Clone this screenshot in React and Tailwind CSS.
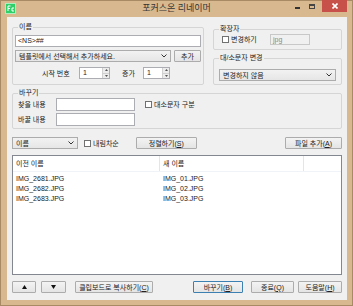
import React from "react";

const font = { fontFamily: '"Liberation Sans", "Noto Sans CJK KR", sans-serif' };

function Group({ title, className, children }) {
  return (
    <div className={`relative border border-[#d5d5d5] rounded-[2px] ${className}`}>
      <span className="absolute left-[5px] top-[-6px] px-[1px] bg-[#f0f0f0] text-[7px] leading-[10px] text-[#222]">
        {title}
      </span>
      {children}
    </div>
  );
}

function Btn({ children, className = "", primary }) {
  return (
    <div
      className={`flex items-center justify-center h-[12px] rounded-[1px] border text-[7px] leading-none text-[#222] bg-gradient-to-b from-[#f3f3f3] to-[#e4e4e4] ${
        primary ? "border-[#3c7fb1]" : "border-[#acacac]"
      } ${className}`}
    >
      {children}
    </div>
  );
}

function Chevron() {
  return (
    <svg width="6" height="4" viewBox="0 0 6 4" className="shrink-0">
      <path d="M0.5 0.5 L3 3 L5.5 0.5" fill="none" stroke="#333" strokeWidth="1" />
    </svg>
  );
}

function Select({ value, className = "" }) {
  return (
    <div
      className={`flex items-center justify-between h-[12px] px-[3px] border border-[#acacac] bg-gradient-to-b from-[#f2f2f2] to-[#e6e6e6] text-[7px] leading-none text-[#222] ${className}`}
    >
      <span className="truncate">{value}</span>
      <Chevron />
    </div>
  );
}

function Check({ label, className = "" }) {
  return (
    <div className={`flex items-center gap-[2px] text-[7px] leading-none text-[#222] ${className}`}>
      <div className="w-[7px] h-[7px] border border-[#707070] bg-white" />
      <span>{label}</span>
    </div>
  );
}

function Spin({ className = "" }) {
  return (
    <div className={`flex h-[12px] border border-[#abadb3] bg-white ${className}`}>
      <span className="flex-1 pl-[3px] text-[7px] leading-[10px] text-[#222]">1</span>
      <div className="w-[7px] flex flex-col border-l border-[#d0d0d0] bg-[#ececec]">
        <div className="flex-1 flex items-center justify-center border-b border-[#d0d0d0]">
          <svg width="3" height="2" viewBox="0 0 3 2"><path d="M0 2 L1.5 0 L3 2 Z" fill="#555" /></svg>
        </div>
        <div className="flex-1 flex items-center justify-center">
          <svg width="3" height="2" viewBox="0 0 3 2"><path d="M0 0 L1.5 2 L3 0 Z" fill="#555" /></svg>
        </div>
      </div>
    </div>
  );
}

const rows = [
  ["IMG_2681.JPG", "IMG_01.JPG"],
  ["IMG_2682.JPG", "IMG_02.JPG"],
  ["IMG_2683.JPG", "IMG_03.JPG"],
];

export default function App() {
  return (
    <div style={font} className="w-[353px] h-[306px] flex flex-col bg-[#d8b98f] border border-[#a88b64]">
      {/* Title bar */}
      <div className="relative h-[16px] flex items-center shrink-0">
        <div className="ml-[4px] mt-[-2px] w-[11px] h-[11px] bg-[#2fcf6a] border border-[#a7f0c0] flex items-center justify-center">
          <svg width="8" height="7" viewBox="0 0 8 7">
            <path d="M1 1 H3.5 M1 1 V6 M1 3.5 H3" stroke="#fff" strokeWidth="1" fill="none" />
            <path d="M7 3 H5 V6 H7" stroke="#fff" strokeWidth="1" fill="none" />
          </svg>
        </div>
        <div className="absolute inset-x-0 top-[1px] text-center text-[9px] leading-[12px] text-[#333]">
          포커스온 리네이머
        </div>
        <div className="ml-auto flex items-start self-start h-full">
          <div className="w-[11px] h-[11px] flex items-center justify-center mt-[1px]">
            <div className="w-[5px] h-[2px] bg-[#333]" />
          </div>
          <div className="w-[13px] h-[11px] flex items-center justify-center ml-[2px]">
            <div className="w-[6px] h-[5px] border border-[#444] border-t-2" />
          </div>
          <div className="ml-[4px] mt-[-1px] w-[25px] h-[12px] bg-[#c7504b] flex items-center justify-center">
            <svg width="6" height="6" viewBox="0 0 6 6">
              <path d="M0.5 0.5 L5.5 5.5 M5.5 0.5 L0.5 5.5" stroke="#fff" strokeWidth="1.6" />
            </svg>
          </div>
          <div className="w-[5px]" />
        </div>
      </div>

      {/* Client area */}
      <div className="ml-[6px] mr-[5px] mb-[5px] flex-1 bg-[#f0f0f0] px-[5px] flex flex-col">
        {/* Top section */}
        <div className="flex mt-[10px]">
          <Group title="이름" className="w-[192px] h-[58px] px-[2px] pt-[7px]">
            <div className="h-[12px] border border-[#abadb3] bg-white px-[2px] text-[7px] leading-[10px] text-[#222]">
              {"<NS>##"}
            </div>
            <div className="flex mt-[3px] gap-[3px]">
              <Select value="템플릿에서 선택해서 추가하세요." className="w-[156px]" />
              <Btn className="flex-1">추가</Btn>
            </div>
            <div className="flex items-center mt-[5px] text-[7px] leading-none text-[#222]">
              <span className="ml-[27px] w-[37px]">시작 번호</span>
              <Spin className="w-[31px]" />
              <span className="ml-[12px] w-[21px]">증가</span>
              <Spin className="w-[27px]" />
            </div>
          </Group>

          <div className="ml-[9px] w-[129px] flex flex-col">
            <Group title="확장자" className="mt-[2px] h-[21px] flex items-center">
              <Check label="변경하기" className="ml-[8px] w-[48px]" />
              <div className="w-[40px] h-[11px] border border-[#c8c8c8] bg-[#f0f0f0] px-[2px] text-[7px] leading-[9px] text-[#8a8a8a]">
                jpg
              </div>
            </Group>
            <Group title="대/소문자 변경" className="mt-[8px] h-[27px] px-[5px] pt-[10px]">
              <Select value="변경하지 않음" className="w-[117px]" />
            </Group>
          </div>
        </div>

        {/* Replace */}
        <Group title="바꾸기" className="mt-[8px] h-[36px] pt-[4px]">
          <div className="flex items-center text-[7px] leading-none text-[#222]">
            <span className="ml-[5px] w-[38px]">찾을 내용</span>
            <div className="w-[79px] h-[13px] border border-[#abadb3] bg-white" />
            <Check label="대소문자 구분" className="ml-[10px]" />
          </div>
          <div className="flex items-center mt-[2px] text-[7px] leading-none text-[#222]">
            <span className="ml-[5px] w-[38px]">바꿀 내용</span>
            <div className="w-[79px] h-[13px] border border-[#abadb3] bg-white" />
          </div>
        </Group>

        {/* Sort row */}
        <div className="flex items-center mt-[8px] h-[12px]">
          <Select value="이름" className="w-[66px]" />
          <Check label="내림차순" className="ml-[6px]" />
          <Btn className="ml-[17px] w-[61px]">정렬하기(<u>S</u>)</Btn>
          <Btn className="ml-auto w-[57px]">파일 추가(<u>A</u>)</Btn>
        </div>

        {/* List */}
        <div className="mt-[6px] h-[120px] border border-[#828790] bg-white flex flex-col text-[7px] leading-none text-[#222]">
          <div className="flex h-[16px] items-center border-b border-[#f0f4f8]">
            <div className="w-[147px] h-full flex items-center pl-[3px] border-r border-[#e5e5e5]">이전 이름</div>
            <div className="w-[144px] h-full flex items-center pl-[3px] border-r border-[#e5e5e5]">새 이름</div>
            <div className="flex-1" />
          </div>
          <div className="pt-[1px]">
            {rows.map(([a, b]) => (
              <div key={a} className="flex h-[10px] items-center">
                <div className="w-[147px] pl-[3px]">{a}</div>
                <div className="w-[144px] pl-[3px]">{b}</div>
              </div>
            ))}
          </div>
        </div>

        {/* Bottom buttons */}
        <div className="flex items-center mt-[6px]">
          <Btn className="w-[24px]">
            <svg width="5" height="4" viewBox="0 0 5 4"><path d="M0 4 L2.5 0 L5 4 Z" fill="#111" /></svg>
          </Btn>
          <Btn className="ml-[5px] w-[25px]">
            <svg width="5" height="4" viewBox="0 0 5 4"><path d="M0 0 L2.5 4 L5 0 Z" fill="#111" /></svg>
          </Btn>
          <Btn className="ml-[9px] w-[78px]">클립보드로 복사하기(<u>C</u>)</Btn>
          <Btn primary className="ml-auto w-[50px]">바꾸기(<u>B</u>)</Btn>
          <Btn className="ml-[8px] w-[43px]">종료(<u>Q</u>)</Btn>
          <Btn className="ml-[4px] w-[44px]">도움말(<u>H</u>)</Btn>
        </div>
      </div>
    </div>
  );
}
